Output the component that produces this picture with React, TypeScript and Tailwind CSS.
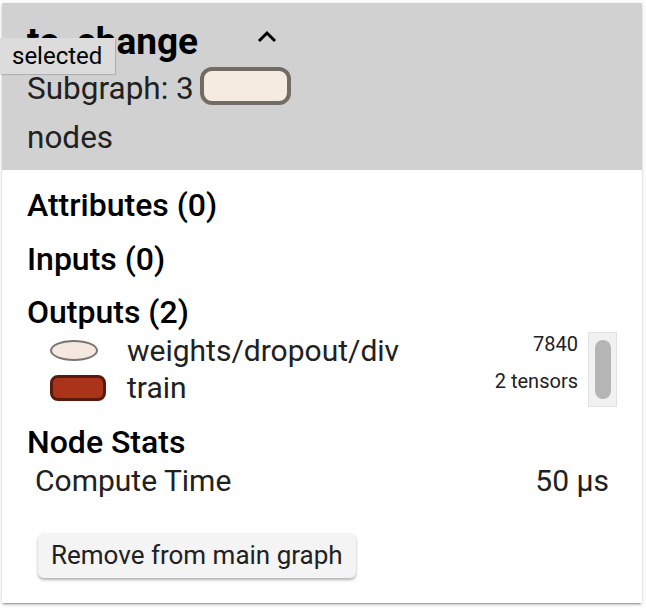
import React from "react";

const FONT = { fontFamily: "Roboto, 'Noto Sans', sans-serif" };

const OUTPUTS = [
  { name: "weights/dropout/div", kind: "op", meta: "7840" },
  { name: "train", kind: "meta", meta: "2 tensors" },
];

function Chevron() {
  return (
    <svg width="20" height="13" viewBox="0 0 20 13" className="ml-[59px] mt-[10px]">
      <polyline points="2,11 10,3 18,11" fill="none" stroke="#000" strokeWidth="3" />
    </svg>
  );
}

function OpIcon({ kind }: { kind: string }) {
  if (kind === "op") {
    return <div className="h-[21px] w-[48px] rounded-[50%] border-2 border-[#7a7572] bg-[#f5e8df]" />;
  }
  return <div className="h-[26px] w-[56px] rounded-[8px] border-[3px] border-[#5a1a0c] bg-[#a93419]" />;
}

export default function App() {
  return (
    <div className="min-h-screen bg-white pl-[2px] pt-[3px]" style={FONT}>
      <div className="relative flex h-[600px] w-[640px] flex-col bg-white text-[#212121] shadow-[0_2px_2px_0_rgba(0,0,0,0.14),0_1px_5px_0_rgba(0,0,0,0.12),0_3px_1px_-2px_rgba(0,0,0,0.2)]">
        <div className="bg-[#d1d1d1] px-[25px] pb-[12px] pt-[17px]">
          <div className="flex items-start">
            <span className="text-[37px] font-bold leading-[44px] text-black">to_change</span>
            <Chevron />
          </div>
          <div className="mt-[3px] flex items-start">
            <span className="pt-[3px] text-[31.5px] leading-[38px]">Subgraph: 3</span>
            <div className="ml-[6px] h-[38px] w-[91px] rounded-[12px] border-[4px] border-[#736c65] bg-[#f6ebe1]" />
          </div>
          <div className="mt-[10px] text-[31.5px] leading-[40px]">nodes</div>
        </div>

        <div className="absolute left-[-2px] top-[35px] flex h-[36px] w-[115px] items-center bg-[#dcdcdc] pl-[12px] text-[24px] text-black shadow-[1px_1px_1px_rgba(0,0,0,0.15)]">
          selected
        </div>

        <div className="flex flex-col px-[25px] pt-[8px]">
          <div className="text-[32px] font-medium leading-[54px] text-black">Attributes (0)</div>
          <div className="text-[32px] font-medium leading-[54px] text-black">Inputs (0)</div>
          <div className="mt-[6px] text-[32px] font-medium leading-[40px] text-black">Outputs (2)</div>

          <div className="flex h-[75px]">
            <div className="flex flex-1 flex-col">
              {OUTPUTS.map((o) => (
                <div key={o.name} className="flex h-[37px] items-center">
                  <div className="ml-[23px] flex w-[77px] items-center">
                    <OpIcon kind={o.kind} />
                  </div>
                  <span className="flex-1 text-[30px] leading-[37px]">{o.name}</span>
                  <span className="mr-[10px] self-start text-[20px] leading-[24px]">{o.meta}</span>
                </div>
              ))}
            </div>
            <div className="flex w-[29px] justify-center border border-[#e2e2e2] bg-[#f1f1f1] py-[7px]">
              <div className="w-[16px] rounded-full bg-[#b5b5b5]" />
            </div>
          </div>

          <div className="mt-[15px] text-[32px] font-medium leading-[40px] text-black">Node Stats</div>
          <div className="mx-[8px] flex justify-between text-[30px] leading-[38px]">
            <span>Compute Time</span>
            <span>50 μs</span>
          </div>

          <div className="mt-[33px]">
            <button className="ml-[11px] h-[45px] rounded-[6px] bg-[#f4f4f4] px-[13px] text-[26px] text-[#212121] shadow-[0_2px_3px_rgba(0,0,0,0.3)]">
              Remove from main graph
            </button>
          </div>
        </div>
      </div>
    </div>
  );
}
